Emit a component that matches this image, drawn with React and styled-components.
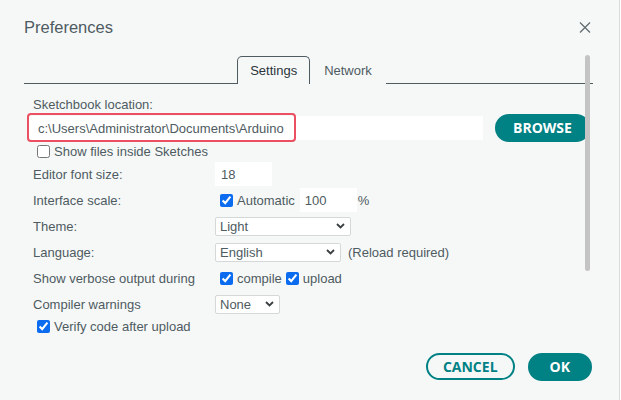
import React from "react";
import styled, { createGlobalStyle } from "styled-components";

const GlobalStyle = createGlobalStyle`
  html, body { margin: 0; padding: 0; background: #ffffff; }
  body { font-family: "Liberation Sans", Arial, sans-serif; }
  * { box-sizing: border-box; }
`;

const TEXT = "#4e5b61";
const TEAL = "#008184";

const Dialog = styled.div`
  width: 620px;
  height: 400px;
  background: #f6f8f8;
  border-right: 1px solid #d9dcdc;
  display: flex;
  flex-direction: column;
  color: ${TEXT};
  font-size: 13px;
`;

const Header = styled.div`
  height: 55px;
  display: flex;
  align-items: center;
  justify-content: space-between;
  padding: 0 28px 0 24px;
`;

const Title = styled.h1`
  margin: 0;
  font-size: 16.5px;
  font-weight: 400;
  color: ${TEXT};
`;

const CloseButton = styled.button`
  width: 12px;
  height: 12px;
  padding: 0;
  border: none;
  background: transparent;
  display: flex;
  color: ${TEXT};
`;

const Main = styled.div`
  position: relative;
  flex: 1;
  padding: 1px 26px 0 24px;
  overflow: hidden;
`;

const Scrollbar = styled.div`
  position: absolute;
  top: 0;
  right: 29px;
  width: 5px;
  height: 216px;
  border-radius: 3px;
  background: #c4c4c4;
`;

const TabBar = styled.div`
  display: flex;
  justify-content: center;
  border-bottom: 1px solid ${TEXT};
  height: 28px;
  padding-left: 6px;
`;

const Tab = styled.div`
  height: 28px;
  padding: 0 ${(p) => (p.$active ? 12 : 13)}px;
  display: flex;
  align-items: center;
  font-size: 13px;
  color: ${(p) => (p.$active ? "#2c353a" : TEXT)};
  border: 1px solid ${(p) => (p.$active ? TEXT : "transparent")};
  border-bottom: none;
  border-radius: 5px 5px 0 0;
  background: #f6f8f8;
  position: relative;
  z-index: 1;
`;

const Body = styled.div`
  padding: 13px 0 0 4px;
`;

const SectionLabel = styled.div`
  padding-left: 5px;
  line-height: 16px;
  height: 16px;
`;

const LocationRow = styled.div`
  margin-top: 1px;
  height: 28px;
  display: flex;
  align-items: center;
  gap: 12px;
`;

const LocationField = styled.div`
  position: relative;
  width: 455px;
  height: 24px;
`;

const TextInput = styled.input`
  width: ${(p) => p.$w}px;
  height: 24px;
  border: none;
  outline: none;
  background: #ffffff;
  padding: 0 ${(p) => p.$pad ?? 6}px;
  font-family: inherit;
  font-size: 13px;
  color: ${TEXT};
`;

const Highlight = styled.span`
  position: absolute;
  left: -1px;
  top: -3px;
  width: 269px;
  height: 29px;
  border: 2px solid #ea4f62;
  border-radius: 4px;
  pointer-events: none;
`;

const Button = styled.button`
  height: ${(p) => p.$h ?? 28}px;
  padding: 0 ${(p) => p.$pad}px;
  border-radius: 14px;
  border: 2px solid ${TEAL};
  background: ${(p) => (p.$outline ? "transparent" : TEAL)};
  color: ${(p) => (p.$outline ? TEAL : "#ffffff")};
  font-family: "Open Sans", "Liberation Sans", sans-serif;
  font-weight: 700;
  font-size: 14px;
  line-height: 1;
  display: flex;
  align-items: center;
  justify-content: center;
`;

const CheckRow = styled.label`
  display: flex;
  align-items: center;
  gap: 4px;
  padding-left: ${(p) => p.$indent ?? 0}px;
  height: ${(p) => p.$h ?? 26}px;
`;

const Check = styled.input.attrs({ type: "checkbox" })`
  width: 13px;
  height: 13px;
  margin: 0;
  accent-color: #0b6cf0;
`;

const Grid = styled.div`
  display: grid;
  grid-template-columns: 187px auto;
  grid-auto-rows: 26px;
  align-items: center;
`;

const Label = styled.div`
  padding-left: 5px;
`;

const Controls = styled.div`
  display: flex;
  align-items: center;
  gap: ${(p) => p.$gap ?? 0}px;
`;

const Inline = styled.span`
  display: inline-flex;
  align-items: center;
  gap: 4px;
  margin-left: ${(p) => p.$ml ?? 0}px;
`;

const SelectWrap = styled.div`
  position: relative;
  width: ${(p) => p.$w}px;
  height: 19px;
`;

const Select = styled.select`
  appearance: none;
  width: 100%;
  height: 100%;
  border: 1px solid #d5d8d8;
  border-radius: 2px;
  background: #ffffff;
  padding: 0 0 0 4px;
  font-family: inherit;
  font-size: 13px;
  color: ${TEXT};
  outline: none;
`;

const Chevron = styled.svg`
  position: absolute;
  right: 6px;
  top: 6px;
  pointer-events: none;
`;

const Footer = styled.div`
  display: flex;
  justify-content: flex-end;
  gap: 13px;
  padding: 0 27px 19px 0;
`;

const Dropdown = ({ w, value }) => (
  <SelectWrap $w={w}>
    <Select defaultValue={value}>
      <option>{value}</option>
    </Select>
    <Chevron width="9" height="6" viewBox="0 0 9 6">
      <path d="M1 1l3.5 3.5L8 1" fill="none" stroke="#3a3f42" strokeWidth="1.8" />
    </Chevron>
  </SelectWrap>
);

export default function App() {
  return (
    <>
      <GlobalStyle />
      <Dialog>
        <Header>
          <Title>Preferences</Title>
          <CloseButton aria-label="Close">
            <svg width="12" height="11" viewBox="0 0 12 11">
              <path d="M1 0.5l10 10M11 0.5l-10 10" stroke="#5f6b70" strokeWidth="1.2" fill="none" />
            </svg>
          </CloseButton>
        </Header>
        <Main>
          <Scrollbar />
          <TabBar>
            <Tab $active>Settings</Tab>
            <Tab>Network</Tab>
          </TabBar>
          <Body>
            <SectionLabel>Sketchbook location:</SectionLabel>
            <LocationRow>
              <LocationField>
                <TextInput $w={455} $pad={10} defaultValue={"c:\\Users\\Administrator\\Documents\\Arduino"} />
                <Highlight />
              </LocationField>
              <Button $pad={16}>BROWSE</Button>
            </LocationRow>
            <CheckRow $indent={9} $h={19}>
              <Check />
              <span>Show files inside Sketches</span>
            </CheckRow>
            <Grid>
              <Label>Editor font size:</Label>
              <Controls>
                <TextInput $w={57} defaultValue="18" />
              </Controls>

              <Label>Interface scale:</Label>
              <Controls>
                <Inline $ml={5}>
                  <Check defaultChecked />
                  <span>Automatic</span>
                </Inline>
                <TextInput $w={57} $pad={5} defaultValue="100" style={{ marginLeft: 5 }} />
                <span style={{ marginLeft: 1 }}>%</span>
              </Controls>

              <Label>Theme:</Label>
              <Controls>
                <Dropdown w={136} value="Light" />
              </Controls>

              <Label>Language:</Label>
              <Controls $gap={7}>
                <Dropdown w={126} value="English" />
                <span>(Reload required)</span>
              </Controls>

              <Label>Show verbose output during</Label>
              <Controls>
                <Inline $ml={5}>
                  <Check defaultChecked />
                  <span>compile</span>
                </Inline>
                <Inline $ml={4}>
                  <Check defaultChecked />
                  <span>upload</span>
                </Inline>
              </Controls>

              <Label>Compiler warnings</Label>
              <Controls>
                <Dropdown w={65} value="None" />
              </Controls>
            </Grid>
            <CheckRow $indent={9} $h={18}>
              <Check defaultChecked />
              <span>Verify code after upload</span>
            </CheckRow>
          </Body>
        </Main>
        <Footer>
          <Button $outline $pad={15} $h={27}>CANCEL</Button>
          <Button $pad={20}>OK</Button>
        </Footer>
      </Dialog>
    </>
  );
}
